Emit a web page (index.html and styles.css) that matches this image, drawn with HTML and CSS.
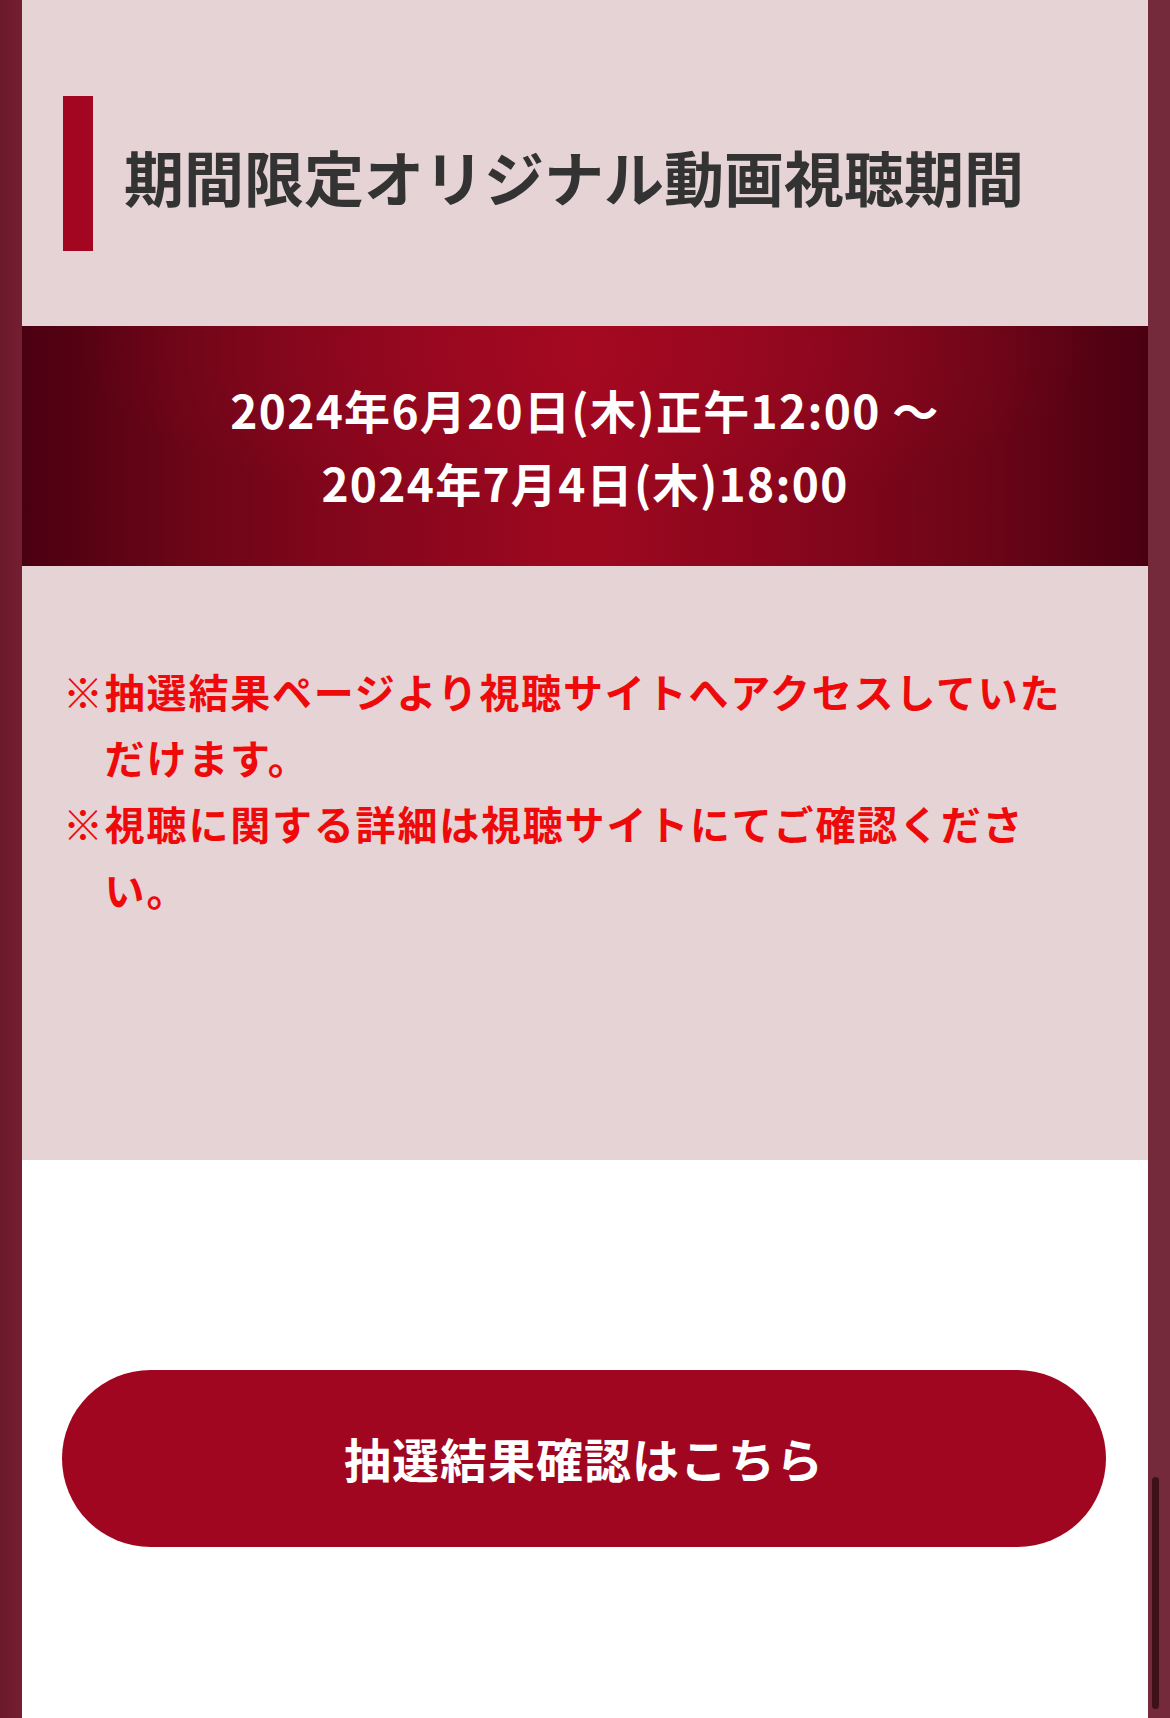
FILE: index.html
```html
<!DOCTYPE html>
<html lang="ja">
<head>
<meta charset="utf-8">
<title>期間限定オリジナル動画視聴期間</title>
<link rel="stylesheet" href="styles.css">
</head>
<body>
<div class="frame">
  <main class="page">
    <section class="info">
      <div class="heading">
        <span class="heading-bar"></span>
        <h2 class="heading-text">期間限定オリジナル動画視聴期間</h2>
      </div>
      <div class="period">
        <p class="period-line">2024年6月20日(木)正午12:00 ～</p>
        <p class="period-line">2024年7月4日(木)18:00</p>
      </div>
      <ul class="notes">
        <li class="note">※抽選結果ページより視聴サイトへアクセスしていただけます。</li>
        <li class="note">※視聴に関する詳細は視聴サイトにてご確認ください。</li>
      </ul>
    </section>
    <section class="action">
      <a class="result-button" href="#">抽選結果確認はこちら</a>
    </section>
  </main>
</div>
<div class="scroll-thumb"></div>
</body>
</html>
```

FILE: styles.css
```css
html, body {
  margin: 0;
  padding: 0;
  height: 100%;
  overflow: hidden;
}

body {
  font-family: "Noto Sans CJK JP", "Noto Sans", sans-serif;
  background: linear-gradient(to right, #6b1a2b 0, #741f31 22px, #7a2536 50%, #742a3a 100%);
}

.frame {
  padding: 0 22px;
  height: 100%;
}

.page {
  background: #ffffff;
  height: 100%;
}

.info {
  background: #e5d3d6;
  height: 1160px;
  display: flex;
  flex-direction: column;
}

.heading {
  display: flex;
  align-items: center;
  padding: 96px 0 75px 41px;
}

.heading-bar {
  width: 30px;
  height: 155px;
  background: #a30620;
  flex: none;
}

.heading-text {
  margin: 0 0 0 31px;
  font-size: 60px;
  font-weight: 700;
  color: #333333;
  line-height: 1.2;
  padding-top: 4px;
}

.period {
  height: 240px;
  background:
    radial-gradient(ellipse 45% 70% at 50% 10%, rgba(172, 10, 36, 0.5) 0%, rgba(172, 10, 36, 0) 100%),
    linear-gradient(to right, #4a0011 0%, #6a0517 14%, #85061c 30%, #9e081f 50%, #85061c 70%, #6a0517 86%, #4a0011 100%);
  display: flex;
  flex-direction: column;
  justify-content: center;
  align-items: center;
}

.period-line {
  margin: 0;
  color: #ffffff;
  font-weight: 700;
  font-size: 46px;
  line-height: 73px;
  letter-spacing: 1.3px;
  text-align: center;
}

.notes {
  list-style: none;
  margin: 0;
  padding: 92px 64px 0 41px;
}

.note {
  color: #ee0a0a;
  font-weight: 700;
  font-size: 40px;
  line-height: 66px;
  letter-spacing: 1.8px;
  padding-left: 1.04em;
  text-indent: -1.04em;
}

.action {
  padding: 210px 42px 0 40px;
}

.result-button {
  display: flex;
  align-items: center;
  justify-content: center;
  height: 177px;
  border-radius: 89px;
  background: #a10620;
  color: #ffffff;
  font-size: 47px;
  font-weight: 700;
  text-decoration: none;
  letter-spacing: 1px;
  padding-bottom: 2px;
  box-sizing: border-box;
}

.scroll-thumb {
  position: fixed;
  right: 11px;
  top: 1477px;
  width: 7px;
  height: 232px;
  border-radius: 4px;
  background: #3e1119;
}
```
